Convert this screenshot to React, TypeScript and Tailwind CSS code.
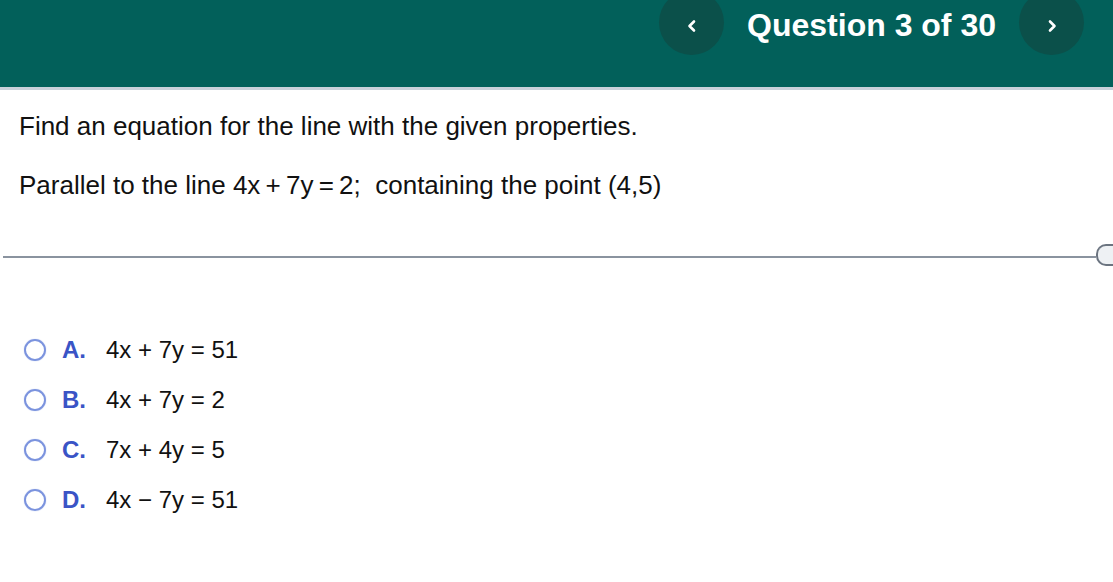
import React from "react";

const options = [
  { letter: "A.", text: "4x + 7y = 51" },
  { letter: "B.", text: "4x + 7y = 2" },
  { letter: "C.", text: "7x + 4y = 5" },
  { letter: "D.", text: "4x \u2212 7y = 51" },
];

function Chevron({ dir }: { dir: "left" | "right" }) {
  return (
    <svg width="12" height="14" viewBox="0 0 12 14" fill="none">
      <polyline
        points={dir === "left" ? "8,2.5 3.5,7 8,11.5" : "4,2.5 8.5,7 4,11.5"}
        stroke="white"
        strokeWidth="2.6"
        strokeLinecap="round"
        strokeLinejoin="round"
      />
    </svg>
  );
}

export default function App() {
  return (
    <div className="w-[1113px] h-[582px] overflow-hidden bg-white font-['Liberation_Sans',Arial,sans-serif] text-[#111]">
      <header className="flex h-[90px] items-start justify-end overflow-hidden border-b-[3px] border-[#c9d1da] bg-[#02605a] pr-[29px]">
        <button className="-mt-[10px] flex h-[65px] w-[65px] items-center justify-center rounded-full bg-[#0b504a]">
          <span className="mt-[6px]">
            <Chevron dir="left" />
          </span>
        </button>
        <h1 className="mx-[23px] mt-[6px] text-[32px] font-bold leading-[38px] text-white">
          Question 3 of 30
        </h1>
        <button className="-mt-[10px] flex h-[65px] w-[65px] items-center justify-center rounded-full bg-[#0b504a]">
          <span className="mt-[6px]">
            <Chevron dir="right" />
          </span>
        </button>
      </header>

      <main>
        <div className="pl-[19px] pt-[21px] text-[26px] leading-[30px]">
          <p>Find an equation for the line with the given properties.</p>
          <p className="mt-[29px]">
            Parallel to the line <span className="[word-spacing:-2px]">4x + 7y = 2;</span>&nbsp; containing the point (4,5)
          </p>
        </div>

        <div className="mt-[44px] flex h-[22px] items-start pl-[3px]">
          <div className="mt-[12px] h-[2px] flex-1 bg-[#8a939f]" />
          <div className="h-[22px] w-[17px] rounded-l-[10px] border-2 border-r-0 border-[#6b7480] bg-[#eef1f4]" />
        </div>

        <ul className="mt-[70px] flex flex-col gap-[22px] pl-[24px]">
          {options.map((o) => (
            <li key={o.letter} className="flex h-[28px] items-center">
              <span className="h-[22px] w-[22px] rounded-full border-2 border-[#7b93de] shadow-[0_0_1px_#9fb0e8]" />
              <span className="ml-[16px] w-[44px] text-[24px] font-bold leading-[28px] text-[#3a54c6]">
                {o.letter}
              </span>
              <span className="text-[24px] leading-[28px]">{o.text}</span>
            </li>
          ))}
        </ul>
      </main>
    </div>
  );
}
